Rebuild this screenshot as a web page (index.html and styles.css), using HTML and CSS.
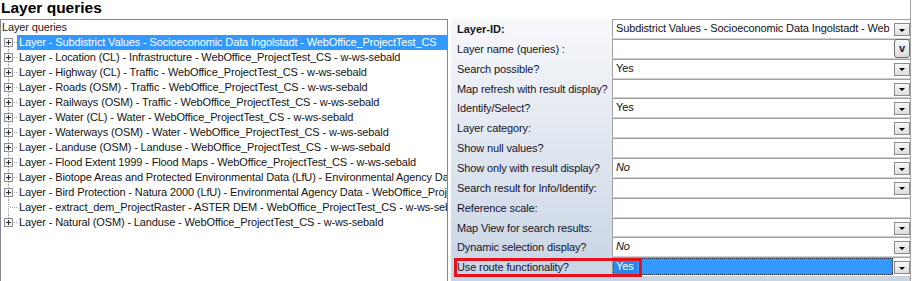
FILE: index.html
```html
<!DOCTYPE html>
<html>
<head>
<meta charset="utf-8">
<link rel="stylesheet" href="styles.css">
</head>
<body>
<div class="window">
  <div class="title">Layer queries</div>
  <div class="main">
    <div class="tree">
      <div class="caption">Layer queries</div>

      <div class="node"><svg class="gut" width="16" height="15" viewBox="0 0 16 15"><path class="dot" d="M7.5 12V15M13 7.5H16"/><rect class="box" x="3.5" y="3.5" width="8" height="8"/><path class="plus" d="M5 7.5H10M7.5 5V10"/></svg><span class="lbl sel">Layer - Subdistrict Values - Socioeconomic Data Ingolstadt - WebOffice_ProjectTest_CS</span></div>

      <div class="node"><svg class="gut" width="16" height="15" viewBox="0 0 16 15"><path class="dot" d="M7.5 0V3M7.5 12V15M13 7.5H16"/><rect class="box" x="3.5" y="3.5" width="8" height="8"/><path class="plus" d="M5 7.5H10M7.5 5V10"/></svg><span class="lbl">Layer - Location (CL) - Infrastructure - WebOffice_ProjectTest_CS - w-ws-sebald</span></div>

      <div class="node"><svg class="gut" width="16" height="15" viewBox="0 0 16 15"><path class="dot" d="M7.5 0V3M7.5 12V15M13 7.5H16"/><rect class="box" x="3.5" y="3.5" width="8" height="8"/><path class="plus" d="M5 7.5H10M7.5 5V10"/></svg><span class="lbl">Layer - Highway (CL) - Traffic - WebOffice_ProjectTest_CS - w-ws-sebald</span></div>

      <div class="node"><svg class="gut" width="16" height="15" viewBox="0 0 16 15"><path class="dot" d="M7.5 0V3M7.5 12V15M13 7.5H16"/><rect class="box" x="3.5" y="3.5" width="8" height="8"/><path class="plus" d="M5 7.5H10M7.5 5V10"/></svg><span class="lbl">Layer - Roads (OSM) - Traffic - WebOffice_ProjectTest_CS - w-ws-sebald</span></div>

      <div class="node"><svg class="gut" width="16" height="15" viewBox="0 0 16 15"><path class="dot" d="M7.5 0V3M7.5 12V15M13 7.5H16"/><rect class="box" x="3.5" y="3.5" width="8" height="8"/><path class="plus" d="M5 7.5H10M7.5 5V10"/></svg><span class="lbl">Layer - Railways (OSM) - Traffic - WebOffice_ProjectTest_CS - w-ws-sebald</span></div>

      <div class="node"><svg class="gut" width="16" height="15" viewBox="0 0 16 15"><path class="dot" d="M7.5 0V3M7.5 12V15M13 7.5H16"/><rect class="box" x="3.5" y="3.5" width="8" height="8"/><path class="plus" d="M5 7.5H10M7.5 5V10"/></svg><span class="lbl">Layer - Water (CL) - Water - WebOffice_ProjectTest_CS - w-ws-sebald</span></div>

      <div class="node"><svg class="gut" width="16" height="15" viewBox="0 0 16 15"><path class="dot" d="M7.5 0V3M7.5 12V15M13 7.5H16"/><rect class="box" x="3.5" y="3.5" width="8" height="8"/><path class="plus" d="M5 7.5H10M7.5 5V10"/></svg><span class="lbl">Layer - Waterways (OSM) - Water - WebOffice_ProjectTest_CS - w-ws-sebald</span></div>

      <div class="node"><svg class="gut" width="16" height="15" viewBox="0 0 16 15"><path class="dot" d="M7.5 0V3M7.5 12V15M13 7.5H16"/><rect class="box" x="3.5" y="3.5" width="8" height="8"/><path class="plus" d="M5 7.5H10M7.5 5V10"/></svg><span class="lbl">Layer - Landuse (OSM) - Landuse - WebOffice_ProjectTest_CS - w-ws-sebald</span></div>

      <div class="node"><svg class="gut" width="16" height="15" viewBox="0 0 16 15"><path class="dot" d="M7.5 0V3M7.5 12V15M13 7.5H16"/><rect class="box" x="3.5" y="3.5" width="8" height="8"/><path class="plus" d="M5 7.5H10M7.5 5V10"/></svg><span class="lbl">Layer - Flood Extent 1999 - Flood Maps - WebOffice_ProjectTest_CS - w-ws-sebald</span></div>

      <div class="node"><svg class="gut" width="16" height="15" viewBox="0 0 16 15"><path class="dot" d="M7.5 0V3M7.5 12V15M13 7.5H16"/><rect class="box" x="3.5" y="3.5" width="8" height="8"/><path class="plus" d="M5 7.5H10M7.5 5V10"/></svg><span class="lbl">Layer - Biotope Areas and Protected Environmental Data (LfU) - Environmental Agency Data - WebOffice_ProjectTest_CS - w-ws-sebald</span></div>

      <div class="node"><svg class="gut" width="16" height="15" viewBox="0 0 16 15"><path class="dot" d="M7.5 0V3M7.5 12V15M13 7.5H16"/><rect class="box" x="3.5" y="3.5" width="8" height="8"/><path class="plus" d="M5 7.5H10M7.5 5V10"/></svg><span class="lbl">Layer - Bird Protection - Natura 2000 (LfU) - Environmental Agency Data - WebOffice_ProjectTest_CS - w-ws-sebald</span></div>

      <div class="node"><svg class="gut" width="16" height="15" viewBox="0 0 16 15"><path class="dot" d="M7.5 0V15M9 7.5H16"/></svg><span class="lbl">Layer - extract_dem_ProjectRaster - ASTER DEM - WebOffice_ProjectTest_CS - w-ws-sebald</span></div>

      <div class="node"><svg class="gut" width="16" height="15" viewBox="0 0 16 15"><path class="dot" d="M7.5 0V3M13 7.5H16"/><rect class="box" x="3.5" y="3.5" width="8" height="8"/><path class="plus" d="M5 7.5H10M7.5 5V10"/></svg><span class="lbl">Layer - Natural (OSM) - Landuse - WebOffice_ProjectTest_CS - w-ws-sebald</span></div>
    </div>

    <div class="panel">
      <div class="grid">
        <div class="lab bold">Layer-ID:</div>
        <div class="val"><span class="txt">Subdistrict Values - Socioeconomic Data Ingolstadt - Web</span><span class="dd"></span></div>

        <div class="lab">Layer name (queries) :</div>
        <div class="val"><span class="txt"></span><span class="vbtn">v</span></div>

        <div class="lab">Search possible?</div>
        <div class="val"><span class="txt">Yes</span><span class="dd"></span></div>

        <div class="lab">Map refresh with result display?</div>
        <div class="val"><span class="txt"></span><span class="dd"></span></div>

        <div class="lab">Identify/Select?</div>
        <div class="val"><span class="txt">Yes</span><span class="dd"></span></div>

        <div class="lab">Layer category:</div>
        <div class="val"><span class="txt"></span><span class="dd"></span></div>

        <div class="lab">Show null values?</div>
        <div class="val"><span class="txt"></span><span class="dd"></span></div>

        <div class="lab">Show only with result display?</div>
        <div class="val"><span class="txt it">No</span><span class="dd"></span></div>

        <div class="lab">Search result for Info/Identify:</div>
        <div class="val"><span class="txt"></span><span class="dd"></span></div>

        <div class="lab">Reference scale:</div>
        <div class="val"><span class="txt"></span></div>

        <div class="lab">Map View for search results:</div>
        <div class="val"><span class="txt"></span><span class="dd"></span></div>

        <div class="lab">Dynamic selection display?</div>
        <div class="val"><span class="txt it">No</span><span class="dd"></span></div>

        <div class="lab marked">Use route functionality?<span class="redbox"></span></div>
        <div class="val"><span class="txt seltxt"><span class="hl">Yes</span></span><span class="dd"></span></div>
      </div>
    </div>
  </div>
</div>
</body>
</html>
```

FILE: styles.css
```css
html, body {
  margin: 0;
  padding: 0;
  background: #ffffff;
  overflow: hidden;
}

body {
  font-family: "Liberation Sans", Arial, sans-serif;
  font-size: 11px;
  letter-spacing: -0.13px;
  color: #111111;
}

.window {
  width: 910px;
  height: 281px;
  border-right: 1px solid #a0a0a0;
  overflow: hidden;
}

.title {
  height: 19px;
  line-height: 16px;
  padding-left: 1px;
  font-size: 15.5px;
  font-weight: bold;
  letter-spacing: 0;
  color: #000000;
}

.main {
  display: flex;
  gap: 3px;
  height: 262px;
}

.tree {
  width: 446px;
  height: 280px;
  flex: none;
  border: 1px solid #828790;
  overflow: hidden;
  white-space: nowrap;
}

.caption {
  height: 15px;
  line-height: 15px;
  padding-left: 1px;
  color: #2a1a2a;
}

.node {
  display: flex;
  height: 15px;
  line-height: 15px;
}

.gut {
  flex: none;
  display: block;
}

.gut .dot {
  fill: none;
  stroke: #a0a0a0;
  stroke-width: 1;
  stroke-dasharray: 1 1;
}

.gut .box {
  fill: #f3f3f3;
  stroke: #8e8f8f;
  stroke-width: 1;
}

.gut .plus {
  fill: none;
  stroke: #2c2c3c;
  stroke-width: 1;
}

.lbl {
  padding: 0 2px;
  color: #141414;
}

.lbl.sel {
  background: #3399ff;
  color: #ffffff;
  padding-right: 14px;
}

.panel {
  width: 459px;
  flex: none;
  height: 262px;
  background: linear-gradient(#f7f8fa, #c8d4e4);
}

.grid {
  display: grid;
  grid-template-columns: 161px 298px;
  grid-auto-rows: 19.87px;
}

.lab {
  box-sizing: border-box;
  padding-left: 6px;
  padding-top: 2px;
  line-height: 17px;
  white-space: nowrap;
  color: #14142a;
  position: relative;
}

.lab.bold {
  font-weight: bold;
  letter-spacing: 0;
}

.val {
  box-sizing: border-box;
  background: #ffffff;
  border-top: 1px solid #a0a0a0;
  border-left: 1px solid #a0a0a0;
  border-bottom: 1px solid #cfcfcf;
  display: flex;
  align-items: flex-start;
}

.txt {
  flex: 1;
  min-width: 0;
  padding-left: 3px;
  line-height: 17px;
  white-space: nowrap;
  overflow: hidden;
  color: #111111;
}

.txt.it {
  font-style: italic;
}

.dd {
  flex: none;
  box-sizing: border-box;
  width: 16px;
  height: 13px;
  margin-top: 3px;
  border: 1px solid #8a8a8a;
  background: linear-gradient(#f7f7f7, #dedede);
  display: flex;
  align-items: center;
  justify-content: center;
}

.dd::after {
  content: "";
  width: 0;
  height: 0;
  border-left: 3px solid transparent;
  border-right: 3px solid transparent;
  border-top: 3px solid #000000;
  margin-top: 1px;
}

.vbtn {
  flex: none;
  box-sizing: border-box;
  width: 16px;
  height: 19px;
  margin-top: -1px;
  border: 1px solid #6e6e6e;
  border-radius: 3px;
  background: linear-gradient(#fbfbfb, #dadada);
  font-weight: bold;
  font-size: 11px;
  line-height: 17px;
  text-align: center;
  color: #0f1a44;
  letter-spacing: 0;
}

.seltxt {
  box-sizing: border-box;
  height: 17px;
  margin-right: 1px;
  padding-left: 1px;
  background: #3399ff;
  border: 1px dotted #1a2a4a;
  line-height: 15px;
  color: #ffffff;
}

.hl {
  display: inline-block;
  background: #2a86ea;
  padding: 0 3px 0 1px;
  line-height: 15px;
}

.redbox {
  position: absolute;
  left: 3px;
  top: 1px;
  width: 188px;
  height: 19px;
  box-sizing: border-box;
  border: 3px solid #e8101a;
  z-index: 2;
}
```
